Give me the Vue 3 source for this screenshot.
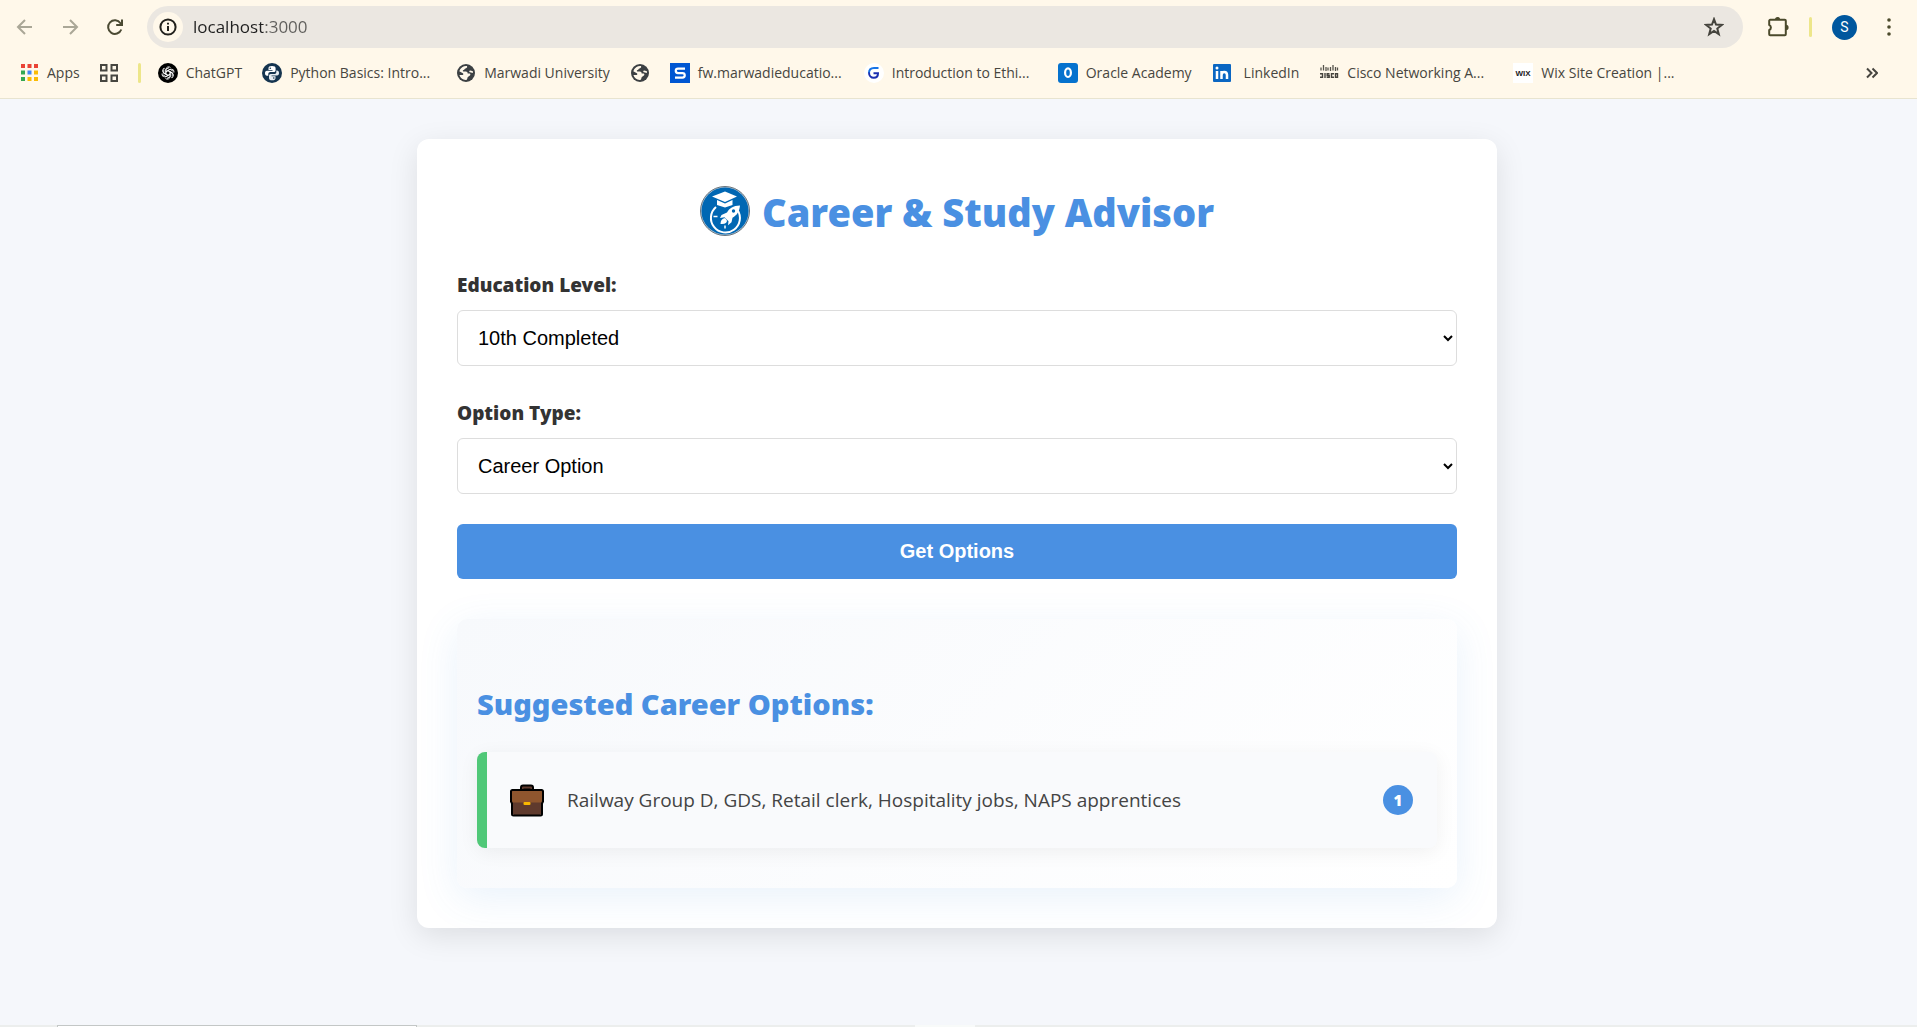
<script setup>
import { ref } from 'vue'

const address = ref('localhost:3000')
const level = ref('10th Completed')
const type = ref('Career Option')
const levels = ['10th Completed', '12th Completed', 'Graduate']
const types = ['Career Option', 'Study Option']
const suggestions = ['Railway Group D, GDS, Retail clerk, Hospitality jobs, NAPS apprentices']

const bookmarks = [
  { icon: 'chatgpt', text: 'ChatGPT' },
  { icon: 'python', text: 'Python Basics: Intro...', cut: true },
  { icon: 'globe', text: 'Marwadi University' },
  { icon: 'globe', text: '' },
  { icon: 'samarth', text: 'fw.marwadieducatio...', cut: true },
  { icon: 'great', text: 'Introduction to Ethi...', cut: true },
  { icon: 'oracle', text: 'Oracle Academy' },
  { icon: 'linkedin', text: 'LinkedIn', wide: true },
  { icon: 'cisco', text: 'Cisco Networking A...', cut: true },
  { icon: 'wix', text: 'Wix Site Creation |...', cut: true },
]
const dots = ['#ea4335', '#ea4335', '#ea4335', '#34a853', '#4285f4', '#fbbc04', '#34a853', '#fbbc04', '#fbbc04']
</script>

<template>
  <div class="window">
    <header class="chrome">
      <div class="toolbar">
        <button class="nav faded" aria-label="Back">
          <svg width="20" height="20" viewBox="0 0 20 20"><path d="M17 10H3.500M10 3L3 10l7 7" /></svg>
        </button>
        <button class="nav faded" aria-label="Forward">
          <svg width="20" height="20" viewBox="0 0 20 20"><path d="M3 10h13.500M10 3l7 7-7 7" /></svg>
        </button>
        <button class="nav" aria-label="Reload">
          <svg width="20" height="20" viewBox="0 0 20 20"><path d="M16.300 12.500A6.800 6.800 0 1 1 15.500 6.200L17 8M17 2.500V8h-5.800" /></svg>
        </button>
        <div class="omnibox">
          <button class="info" aria-label="Site information">
            <svg width="18" height="18" viewBox="0 0 18 18"><circle cx="9" cy="9" r="7.600" /><path d="M9 8v5M9 4.800v1.800" /></svg>
          </button>
          <input v-model="address" class="address" aria-label="Address" spellcheck="false" />
          <button class="star" aria-label="Bookmark this page">
            <svg width="20" height="20" viewBox="0 0 20 20"><path d="M10 2.200l2 5.400 5.800.3-4.500 3.700 1.500 5.600L10 14l-4.800 3.200 1.500-5.600L2.200 7.900 8 7.600z" /></svg>
          </button>
        </div>
        <button class="puzzle" aria-label="Extensions">
          <svg width="22" height="22" viewBox="0 0 22 22">
            <path d="M3.500 3.800h14.300a1 1 0 0 1 1 1v13.400a1 1 0 0 1-1 1H3.200a1 1 0 0 1-1-1v-4a3 3 0 0 0 0-5.400v-4a1 1 0 0 1 1-1z" />
            <path class="solid" d="M8 3.500a2.600 2.600 0 0 1 5.200 0zM19 8.800a2.600 2.600 0 0 1 0 5.200z" />
          </svg>
        </button>
        <span class="divider"></span>
        <button class="avatar" aria-label="Profile">S</button>
        <button class="menu" aria-label="Menu">
          <svg width="4" height="18" viewBox="0 0 4 18"><circle cx="2" cy="2" r="1.800" /><circle cx="2" cy="9" r="1.800" /><circle cx="2" cy="16" r="1.800" /></svg>
        </button>
      </div>

      <nav class="bookmarks">
        <a href="#" class="bookmark apps">
          <svg width="18" height="18" viewBox="0 0 18 18">
            <rect v-for="(c, i) in dots" :key="i" :x="(i % 3) * 6.5" :y="Math.floor(i / 3) * 6.5" width="4" height="4" :fill="c" />
          </svg>
          <span>Apps</span>
        </a>
        <button class="grid" aria-label="Tab groups">
          <svg width="18" height="18" viewBox="0 0 18 18"><path d="M1 1h5.500v5.500H1zM11.500 1H17v5.500h-5.500zM1 11.500h5.500V17H1zM11.500 11.500H17V17h-5.500z" /></svg>
        </button>
        <span class="divider"></span>
        <a v-for="(b, i) in bookmarks" :key="i" href="#" class="bookmark" :class="{ cut: b.cut, wide: b.wide }" :aria-label="b.text || 'Bookmark'">
          <svg v-if="b.icon === 'chatgpt'" width="20" height="20" viewBox="0 0 20 20">
            <circle cx="10" cy="10" r="10" fill="#000" />
            <g fill="none" stroke="#fff" stroke-width="0.9">
              <path v-for="n in 6" :key="n" :transform="`rotate(${n * 60} 10 10)`" d="M8 11.200V6.400a2.600 2.600 0 0 1 4.600-1.600M8 8.600l4-2.300 3.200 1.900" />
            </g>
          </svg>
          <svg v-else-if="b.icon === 'python'" width="20" height="20" viewBox="0 0 20 20">
            <circle cx="10" cy="10" r="10" fill="#15344f" />
            <path fill="#fff" d="M10 3c-2.500 0-3.500.8-3.500 2.300V7h4v.8H5C3.500 7.800 3 9 3 10.300s.7 2.500 2 2.500h1.300V11c0-1 .9-1.900 2-1.900h3.500c1 0 1.800-.8 1.800-1.800v-2C13.600 3.800 12.500 3 10 3z" />
            <path fill="#e7edf2" d="M10 17.200c2.500 0 3.500-.8 3.500-2.300v-1.700h-4v-.8H15c1.500 0 2-1.200 2-2.400s-.7-2.500-2-2.500h-.7v1.700c0 1-.9 1.900-2 1.900H8.800c-1 0-1.800.8-1.800 1.800v2c0 1.500 1 2.300 3 2.300z" />
            <circle cx="8.300" cy="5.200" r=".8" fill="#15344f" /><circle cx="11.800" cy="15" r=".8" fill="#15344f" />
          </svg>
          <svg v-else-if="b.icon === 'globe'" width="20" height="20" viewBox="0 0 20 20">
            <circle cx="10" cy="10" r="9" fill="#3c4043" />
            <path fill="#fff8ea" d="M11 3.100c.5 1.300-.1 2.200-1.500 2.400-1.100.2-.8 1.300-1.900 1.600-.8.200-1 .9-.4 1.400h2.600c1.200 0 1.900.9 1.900 2.100h1.800c.9 0 1.200 1.400.4 2l-1.700 1.200c-.6.500-.9.900-.9 1.600 0 .9-.7 1.500-1.600 1.500A7 7 0 0 1 3.400 12h3.200c.9 0 1-1.200.3-1.700L3.300 8.300A7.100 7.100 0 0 1 11 3.100z" />
            <path fill="#fff8ea" d="M16.700 7.900c-1.100.3-1.900-.6-2.800-.4-.9.300-.9 1.600.1 1.800l2.900.7c.1-.7 0-1.400-.2-2.100z" />
          </svg>
          <svg v-else-if="b.icon === 'samarth'" width="20" height="20" viewBox="0 0 20 20">
            <rect width="20" height="20" fill="#0056d2" />
            <path fill="none" stroke="#fff" stroke-width="2.200" d="M15 5.600H8a2 2 0 0 0 0 4.500h4.500a2.200 2.200 0 0 1 0 4.500H5" />
          </svg>
          <svg v-else-if="b.icon === 'great'" width="20" height="20" viewBox="0 0 20 20">
            <circle cx="10" cy="10" r="10" fill="#fff" />
            <path fill="none" stroke="#1573e6" stroke-width="2" d="M14.500 5H10C7 5 5 7 5 10" />
            <path fill="none" stroke="#1b2fb0" stroke-width="2" d="M5 9.500c0 3 2 5.300 4.800 5.300 2.600 0 4.200-1.800 4.200-4.500H9.500" />
          </svg>
          <svg v-else-if="b.icon === 'oracle'" width="20" height="20" viewBox="0 0 20 20">
            <rect width="20" height="20" rx="3" fill="#0572ce" />
            <ellipse cx="10" cy="9.700" rx="2.900" ry="4.300" fill="none" stroke="#fff" stroke-width="2.200" />
          </svg>
          <svg v-else-if="b.icon === 'linkedin'" width="20" height="20" viewBox="0 0 20 20">
            <rect x="1" y="1" width="18" height="18" rx="1" fill="#0a66c2" />
            <path fill="none" stroke="#fff" stroke-width="2.500" d="M5 8v8M9.500 16V8M9.500 12c0-4 5.500-4 5.500 0v4" />
            <circle cx="5" cy="5" r="1.500" fill="#fff" />
          </svg>
          <svg v-else-if="b.icon === 'cisco'" width="20" height="20" viewBox="0 0 20 20">
            <path fill="none" stroke="#55534c" stroke-width="1.300" d="M2 4.500v3M4.500 2v5.500M7 4v4M9 4.500v3M11.500 4v4M14 2v5.500M16.500 4v4M18.500 4.500v3" />
            <path fill="none" stroke="#45433d" stroke-width="1.400" d="M1 10.700h2.500v3.600H1M6 10v5M10.500 10.700H8.200v1.800h2v1.800H7.700M15 10.700h-2.500v3.600H15M16.500 10.700h2v3.600h-2z" />
          </svg>
          <svg v-else width="20" height="20" viewBox="0 0 20 20">
            <rect width="20" height="20" fill="#fff" />
            <text x="10" y="13" text-anchor="middle" class="wix">WIX</text>
          </svg>
          <span v-if="b.text">{{ b.text }}</span>
        </a>
        <button class="more" aria-label="More bookmarks">
          <svg width="12" height="12" viewBox="0 0 12 12"><path d="M1 1.500L5.500 6 1 10.500M6.500 1.500L11 6l-4.500 4.500" /></svg>
        </button>
      </nav>
    </header>

    <main class="page">
      <section class="card">
        <h1>
          <svg class="logo" width="50" height="50" viewBox="0 0 50 50">
            <circle cx="25" cy="25" r="24.500" fill="#a9c3d8" stroke="#6b747b" />
            <circle cx="25" cy="25" r="23.500" fill="#0067b3" />
            <path d="M16 21a14.500 14.500 0 1 0 21.500 3" fill="none" stroke="#fff" stroke-width="2" />
            <path d="M12 10.500L25 5.500l12 5-12 5.500z" fill="#fff" />
            <path d="M17 14l8 3.500 7.500-3.500v5L25 21.500 17 19z" fill="#fff" />
            <path d="M40 19.500c-7 .3-10.500 2.500-13 7l-5.500 2.500-1.500 3 4.500-.8 4 4-.5 4 3.500-3 1-4.500c4.500-2.500 6.800-6 7.500-12.200z" fill="#fff" />
            <circle cx="33.500" cy="25" r="1.700" fill="#0067b3" />
            <path d="M20.500 38c0-3.500 1.300-5.500 4.500-6l2 2.500c0 2.500-2 4-6.500 3.500z" fill="#fff" />
            <path d="M13.500 30.500h4M25 39.500v3" stroke="#fff" stroke-width="1.500" />
          </svg>
          <span>Career &amp; Study Advisor</span>
        </h1>

        <form @submit.prevent>
          <div class="field">
            <label for="level">Education Level:</label>
            <select id="level" v-model="level">
              <option v-for="l in levels" :key="l">{{ l }}</option>
            </select>
          </div>
          <div class="field">
            <label for="type">Option Type:</label>
            <select id="type" v-model="type">
              <option v-for="t in types" :key="t">{{ t }}</option>
            </select>
          </div>
          <button class="submit" type="submit">Get Options</button>
        </form>

        <section class="results">
          <h2>Suggested Career Options:</h2>
          <ul>
            <li v-for="(s, i) in suggestions" :key="s">
              <svg class="case" width="36" height="36" viewBox="0 0 36 36">
                <path d="M12 8V5.500a2 2 0 0 1 2-2h8a2 2 0 0 1 2 2V8" fill="#5f3a2d" stroke="#000" stroke-width="2" />
                <path d="M14.500 7.500h7" stroke="#000" stroke-width="2" />
                <path d="M3 20h30l-1 12a2 2 0 0 1-2 1.500H6A2 2 0 0 1 4 32z" fill="#5f3a2d" />
                <path d="M2 20.500V9.500a1.500 1.500 0 0 1 1.500-1.500h29A1.500 1.500 0 0 1 34 9.500v11z" fill="#8f562e" />
                <path d="M3.500 8h29A1.500 1.500 0 0 1 34 9.500v10l-1 2V32a1.500 1.500 0 0 1-1.500 1.500h-27A1.500 1.500 0 0 1 3 32V21.500l-1-2v-10A1.500 1.500 0 0 1 3.500 8z" fill="none" stroke="#000" stroke-width="2" />
                <rect x="14.500" y="20" width="7" height="3" rx="1" fill="#f9b800" />
              </svg>
              <span class="text">{{ s }}</span>
              <span class="badge">{{ i + 1 }}</span>
            </li>
          </ul>
        </section>
      </section>
    </main>

    <footer class="taskbar"><span class="search"></span><span class="active"></span></footer>
  </div>
</template>

<style>
body {
  margin: 0;
  background: #f5f7fb;
}
</style>

<style scoped>
* {
  box-sizing: border-box;
}
.window {
  display: flex;
  flex-direction: column;
  min-height: 100vh;
  font-family: "Noto Sans", "Open Sans", sans-serif;
  color: #333;
}
button {
  padding: 0;
  border: 0;
  background: none;
  font-family: inherit;
}
svg {
  display: block;
  flex: none;
}
.chrome {
  height: 99px;
  background: #fff8ea;
  border-bottom: 1px solid #e8e4d0;
}
.toolbar {
  display: flex;
  align-items: center;
  height: 48px;
  padding: 6px 26px 0 15px;
}
.toolbar svg path,
.info circle {
  fill: none;
  stroke: currentColor;
  stroke-width: 2;
}
.nav {
  margin-right: 25px;
  color: #4b4a33;
}
.nav.faded {
  color: #aaa797;
}
.nav:nth-child(3) {
  margin-right: 22px;
}
.omnibox {
  display: flex;
  flex: 1;
  align-items: center;
  height: 42px;
  padding: 0 19px 0 6px;
  border-radius: 21px;
  background: #ebe7e1;
}
.info {
  display: grid;
  place-items: center;
  width: 30px;
  height: 30px;
  border-radius: 50%;
  background: #fff8ea;
  color: #22211c;
}
.address {
  flex: 1;
  min-width: 0;
  margin-left: 10px;
  padding: 0;
  border: 0;
  outline: 0;
  background: linear-gradient(90deg, #1f1f1f 70px, #5f5e5b 70px);
  background-clip: text;
  color: transparent;
  font: 17px/24px "Open Sans", sans-serif;
}
.star {
  color: #45443d;
}
.puzzle {
  margin-left: 24px;
  color: #4b4a2c;
}
.toolbar svg .solid {
  fill: currentColor;
  stroke: none;
}
.divider {
  width: 3px;
  height: 20px;
  border-radius: 2px;
  background: #ede68a;
}
.toolbar .divider {
  margin: 0 20px;
}
.avatar {
  width: 25px;
  height: 25px;
  border-radius: 50%;
  background: #00579e;
  color: #fff;
  font: 14px/25px Roboto, sans-serif;
}
.menu {
  margin-left: 30px;
  color: #4b4a2c;
}
.menu circle {
  fill: currentColor;
}
.bookmarks {
  display: flex;
  align-items: center;
  gap: 20px;
  height: 50px;
  padding: 0 39px 0 21px;
}
.bookmarks .divider {
  margin-right: -3px;
}
.bookmark {
  display: flex;
  align-items: center;
  gap: 8px;
  color: #474640;
  font-family: "Open Sans", sans-serif;
  font-size: 14px;
  line-height: 20px;
  text-decoration: none;
  white-space: nowrap;
}
.bookmark.cut span {
  width: 146px;
}
.bookmark.wide {
  gap: 12px;
}
.grid path,
.more path {
  fill: none;
  stroke: #474640;
  stroke-width: 2;
}
.wix {
  font: 700 8px "Liberation Sans", sans-serif;
  fill: #222;
}
.more {
  margin-left: auto;
}
.page {
  flex: 1;
  padding: 40px 3px 40px 0;
}
.card {
  max-width: 1080px;
  margin: 0 auto;
  padding: 40px;
  border-radius: 12px;
  background: #fff;
  box-shadow: 0 8px 30px rgba(0, 0, 0, 0.1);
}
h1 {
  display: flex;
  align-items: center;
  justify-content: center;
  gap: 12px;
  margin: 0 0 27px;
  color: #4a90e2;
  font-size: 38px;
  font-weight: 900;
  line-height: 62px;
}
h1 span {
  padding-top: 2px;
}
.field {
  margin-bottom: 32px;
}
.field:nth-of-type(2) {
  margin-bottom: 30px;
}
label {
  display: block;
  margin-bottom: 10px;
  font-size: 19px;
  font-weight: 900;
  line-height: 30px;
}
select {
  display: block;
  width: 100%;
  height: 56px;
  padding: 0 16px;
  border: 1px solid #ddd;
  border-radius: 6px;
  background: #fff;
  color: #000;
  font: 20px "Liberation Sans", sans-serif;
}
.submit {
  display: block;
  width: 100%;
  height: 55px;
  border-radius: 6px;
  background: #4a90e2;
  color: #fff;
  font: 700 20px "Liberation Sans", sans-serif;
}
.results {
  margin-top: 40px;
  padding: 63px 20px 20px;
  border-radius: 10px;
  background: linear-gradient(135deg, #f7f9fc, #fff);
  box-shadow: 0 10px 40px rgba(74, 144, 226, 0.12);
}
h2 {
  margin: 0 0 26px;
  color: #4a90e2;
  font-size: 29px;
  font-weight: 900;
  line-height: 44px;
}
ul {
  margin: 0;
  padding: 0;
  list-style: none;
}
li {
  display: flex;
  align-items: center;
  height: 96px;
  margin-bottom: 20px;
  padding: 0 24px 0 22px;
  border-left: 10px solid #50c878;
  border-radius: 8px;
  background: #f9fafc;
  box-shadow: 0 4px 20px rgba(0, 0, 0, 0.06);
}
.text {
  flex: 1;
  margin-left: 22px;
  color: #444;
  font-family: "Open Sans", sans-serif;
  font-size: 19px;
  line-height: 30px;
}
.badge {
  width: 30px;
  height: 30px;
  border-radius: 50%;
  background: #4a90e2;
  color: #fff;
  font-size: 15px;
  font-weight: 900;
  line-height: 30px;
  text-align: center;
}
.taskbar {
  display: flex;
  height: 2px;
  padding-left: 57px;
  background: #eceeed;
}
.search {
  width: 360px;
  border: 1px solid #c3c7c6;
  border-bottom: 0;
  background: #fff;
}
.active {
  width: 60px;
  margin-left: 498px;
  background: #f8faf9;
}
</style>
